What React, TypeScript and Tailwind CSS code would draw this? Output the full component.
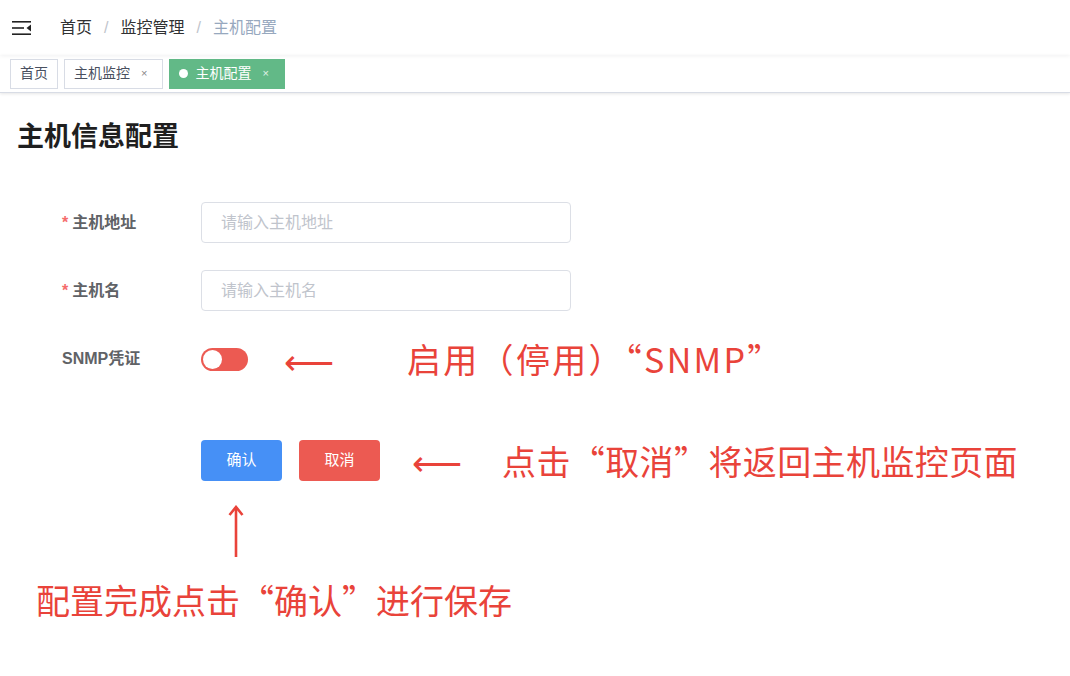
import React from "react";

const ui = { fontFamily: '"Liberation Sans", "Noto Sans CJK SC", sans-serif' };
const note = { fontFamily: '"Noto Sans CJK SC", sans-serif' };

function MenuIcon() {
  return (
    <svg width="20" height="16" viewBox="0 0 20 16" className="block">
      <rect x="0" y="1" width="19" height="1.6" fill="#222" />
      <rect x="0" y="7.2" width="12" height="1.6" fill="#222" />
      <polygon points="19,4.6 19,11.4 14.5,8" fill="#222" />
      <rect x="0" y="13.4" width="19" height="1.6" fill="#222" />
    </svg>
  );
}

function UpArrow() {
  return (
    <svg width="16" height="52" viewBox="0 0 16 52" className="block">
      <line x1="8" y1="2" x2="8" y2="52" stroke="#e9433a" strokeWidth="2.6" />
      <polyline points="1.5,10 8,2 14.5,10" fill="none" stroke="#e9433a" strokeWidth="2.6" />
    </svg>
  );
}

function Tag({ label, active, closable }: { label: string; active?: boolean; closable?: boolean }) {
  return (
    <div
      className={`flex h-[30px] items-center border pl-[9px] text-[14px] ${closable ? "pr-[15px]" : "pr-[9px]"} ${
        active ? "border-[#62b987] bg-[#62b987] text-white" : "border-[#d8dce5] bg-white text-[#495060]"
      }`}
    >
      {active && <span className="mr-[7px] h-[9px] w-[9px] rounded-full bg-white" />}
      <span>{label}</span>
      {closable && <span className={`ml-[11px] text-[11px] ${active ? "text-white/80" : "text-[#888]"}`}>×</span>}
    </div>
  );
}

function Field({ label, placeholder }: { label: string; placeholder: string }) {
  return (
    <div className="flex h-[41px] items-center">
      <label className="w-[139px] text-[16px] font-bold text-[#606266]">
        <span className="mr-[4px] text-[#f56c6c]">*</span>
        {label}
      </label>
      <div className="flex h-[41px] w-[370px] items-center rounded-[4px] border border-[#dcdfe6] px-[19px] text-[16px] text-[#c0c4cc]">
        {placeholder}
      </div>
    </div>
  );
}

export default function App() {
  return (
    <div className="min-h-[676px] w-[1070px] bg-white" style={ui}>
      {/* Header */}
      <header className="flex h-[55px] items-center shadow-[0_1px_4px_rgba(0,21,41,0.06)]">
        <div className="pl-[12px] pr-[28px]">
          <MenuIcon />
        </div>
        <nav className="flex items-center text-[16px]">
          <span className="text-[#303133]">首页</span>
          <span className="mx-[12px] text-[#c0c4cc]">/</span>
          <span className="text-[#303133]">监控管理</span>
          <span className="mx-[12px] text-[#c0c4cc]">/</span>
          <span className="text-[#97a8be]">主机配置</span>
        </nav>
      </header>

      {/* Tags */}
      <div className="flex h-[38px] items-center gap-[6px] border-b border-[#d8dce5] pl-[10px] shadow-[0_1px_3px_rgba(0,0,0,0.1)]">
        <Tag label="首页" />
        <Tag label="主机监控" closable />
        <Tag label="主机配置" active closable />
      </div>

      {/* Content */}
      <main className="px-[17px] pt-[26px]">
        <h1 className="text-[27px] font-bold leading-[36px] text-[#1f1f1f]">主机信息配置</h1>

        <div className="ml-[45px] mt-[47px] flex flex-col gap-[27px]">
          <Field label="主机地址" placeholder="请输入主机地址" />
          <Field label="主机名" placeholder="请输入主机名" />

          <div className="-mt-[3px] flex h-[48px] items-center">
            <label className="w-[139px] text-[16px] font-bold text-[#606266]">SNMP凭证</label>
            <div className="flex h-[23px] w-[47px] items-center rounded-full bg-[#ec5a52] pl-[2px]">
              <span className="h-[19px] w-[19px] rounded-full bg-white" />
            </div>
            <span className="ml-[36px] text-[35px] leading-none text-[#e9433a]" style={note}>
              ⟵
            </span>
            <span className="ml-[73px] text-[34px] leading-none tracking-[2.3px] text-[#e9433a]" style={note}>
              启用（停用）“SNMP”
            </span>
          </div>

          <div className="mt-[30px] flex items-center pl-[139px]">
            <button className="h-[41px] w-[81px] rounded-[4px] bg-[#4690f6] text-[15px] text-white">确认</button>
            <button className="ml-[17px] h-[41px] w-[81px] rounded-[4px] bg-[#ec5a52] text-[15px] text-white">
              取消
            </button>
            <span className="ml-[32px] text-[35px] leading-none text-[#e9433a]" style={note}>
              ⟵
            </span>
            <span className="ml-[40px] text-[34px] leading-none tracking-[0.4px] text-[#e9433a]" style={note}>
              点击“取消”将返回主机监控页面
            </span>
          </div>
        </div>

        <div className="ml-[211px] mt-[24px]">
          <UpArrow />
        </div>
        <div className="ml-[19px] mt-[21px] text-[34px] leading-[44px] text-[#e9433a]" style={note}>
          配置完成点击“确认”进行保存
        </div>
      </main>
    </div>
  );
}
